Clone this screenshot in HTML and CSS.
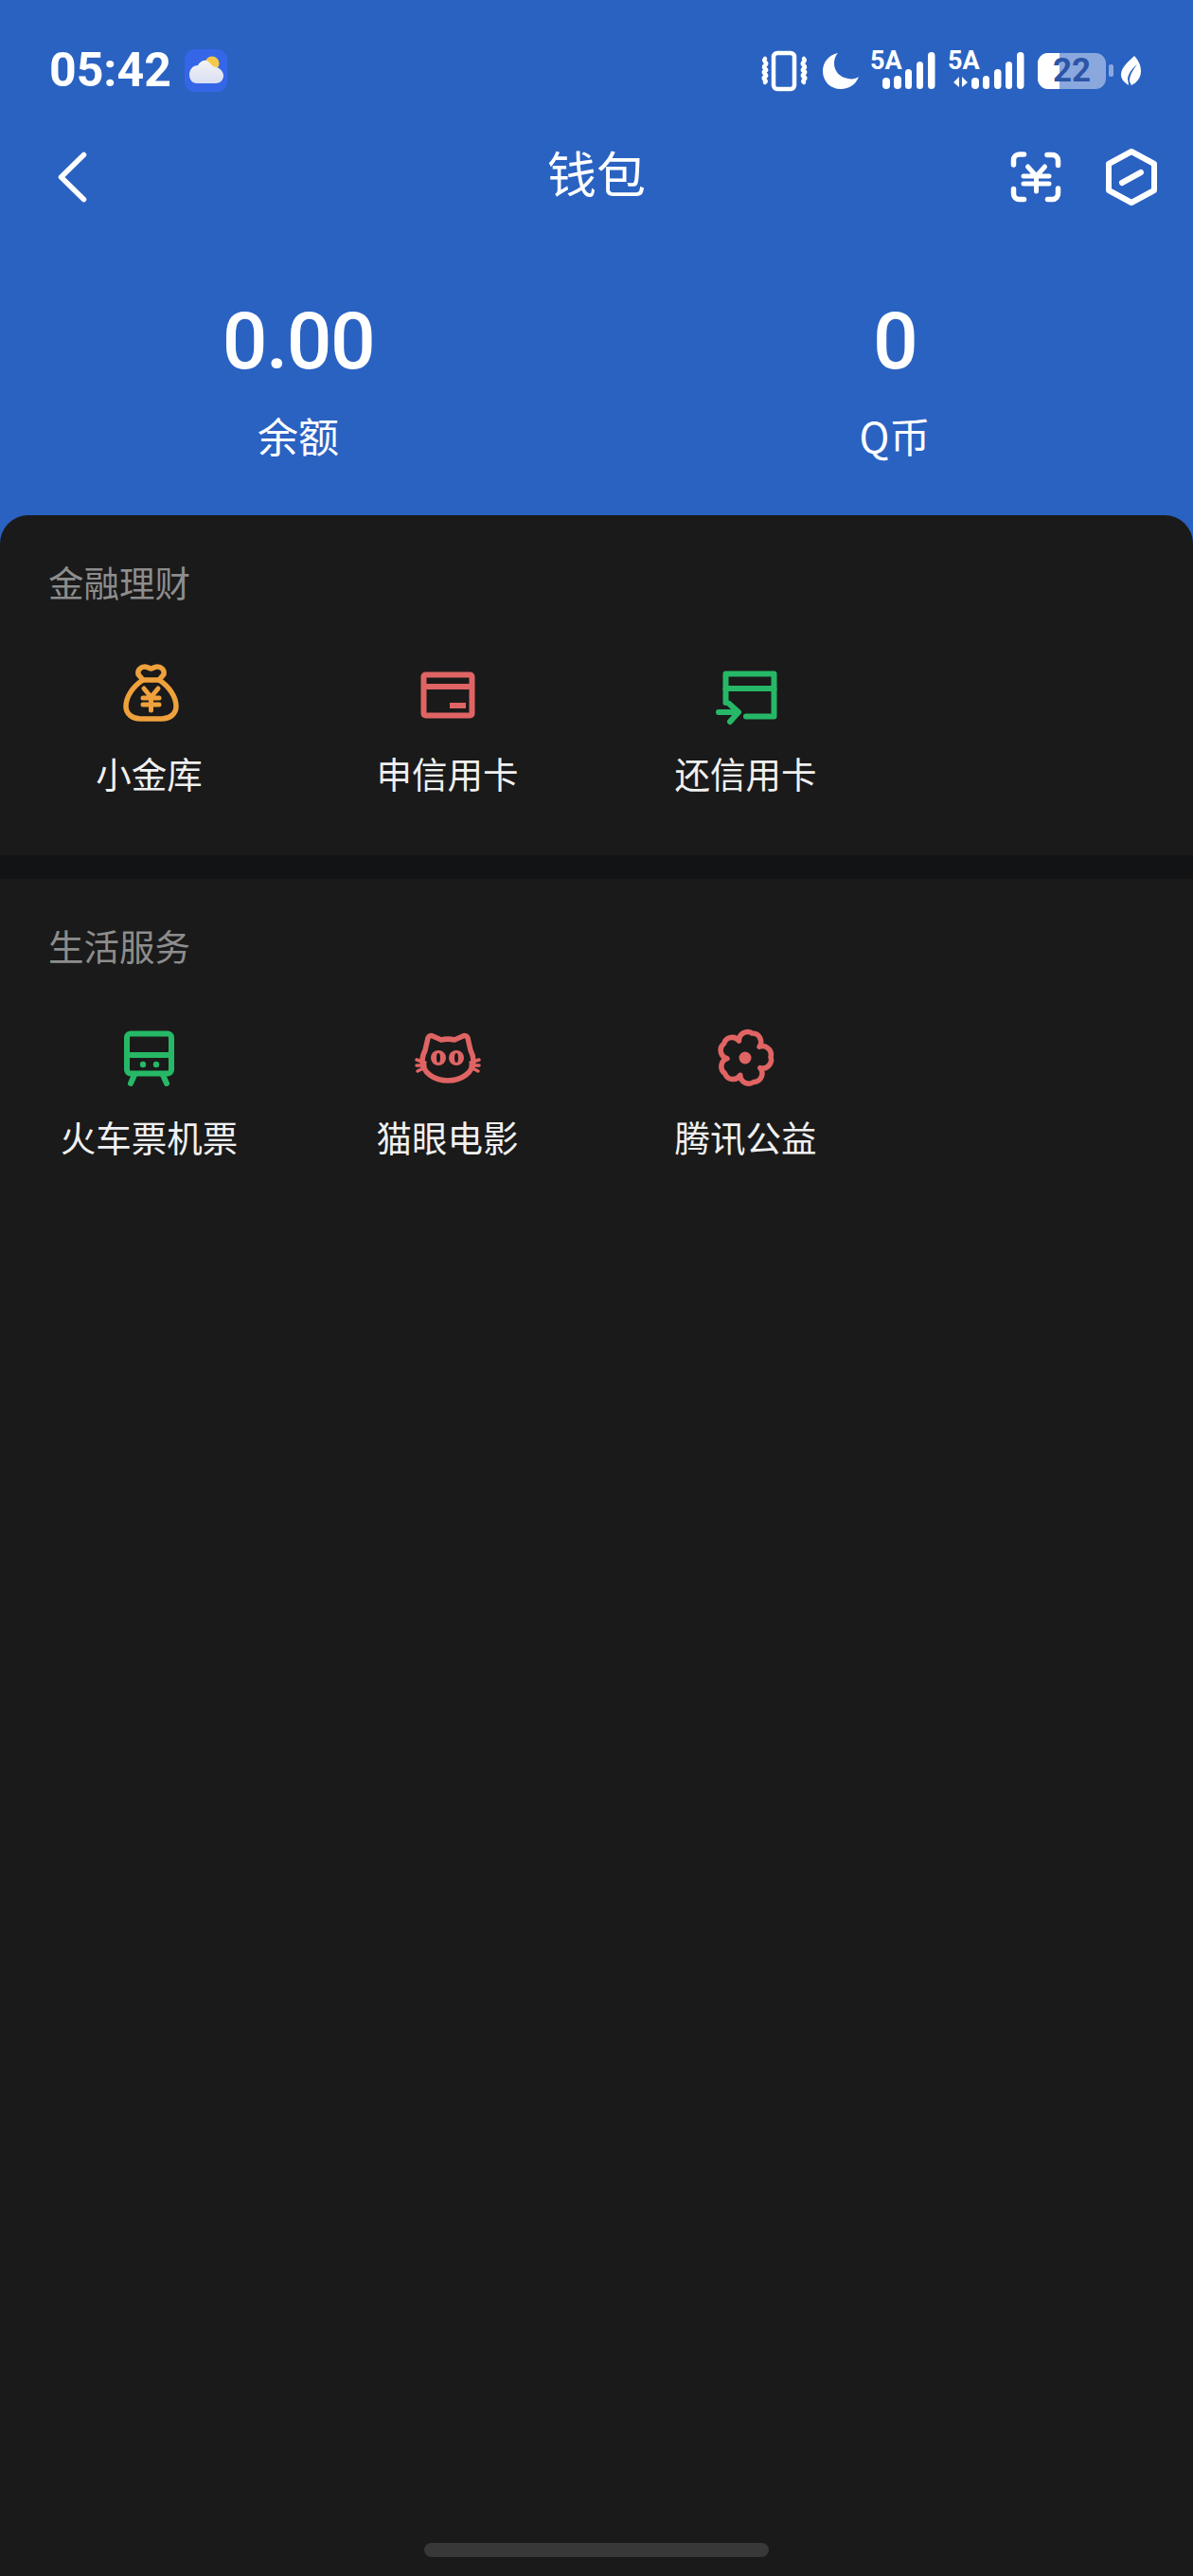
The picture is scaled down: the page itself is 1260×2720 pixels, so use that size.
FILE: index.html
```html
<!DOCTYPE html>
<html lang="zh-CN">
<head>
<meta charset="utf-8">
<title>钱包</title>
<link rel="stylesheet" href="styles.css">
</head>
<body>
<div class="page">
  <header class="top">
    <div class="status">
      <div class="status-left">
        <span class="time">05:42</span>
        <svg class="weather" viewBox="0 0 45 45">
          <defs>
            <linearGradient id="cloud" x1="0" y1="0" x2="0" y2="1">
              <stop offset="0" stop-color="#f3f3f3"/>
              <stop offset="1" stop-color="#d9dff3"/>
            </linearGradient>
          </defs>
          <rect width="45" height="45" rx="11" fill="#3566e8"/>
          <circle cx="29" cy="15" r="7.5" fill="#f5c84a"/>
          <path d="M13 36C8 36 5 32 5 27C5 21 9 17 14 17C16 13 20 11 23 12C27 13 28 18 33 19C38 20 41 24 41 28C41 33 37 36 33 36Z" fill="url(#cloud)"/>
        </svg>
      </div>
      <div class="status-right">
        <svg class="ic-vib" viewBox="0 0 50 42">
          <rect x="13" y="2" width="22" height="38" rx="4" fill="none" stroke="#fff" stroke-width="4.5"/>
          <path d="M4 8c-3 3 4 4 0 7s4 4 0 6 4 4 0 6 3 4 0 6M45 8c3 3-4 4 0 7s-4 4 0 6-4 4 0 6-3 4 0 6" fill="none" stroke="#fff" stroke-width="4.5" stroke-linecap="round"/>
        </svg>
        <svg class="ic-moon" viewBox="0 0 38 38">
          <path d="M16 0C6 2 0 10 0 19c0 11 8 19 19 19 9 0 16-5 19-13-3 2-7 3-11 2C18 26 12 19 12 11c0-4 1-8 4-11z" fill="#fff"/>
        </svg>
        <div class="net net-a">
          <span class="net-label">5A</span>
          <svg class="bars" viewBox="0 0 56 39">
            <rect x="0" y="27" width="8" height="12" rx="4" fill="#fff"/>
            <rect x="12" y="25" width="8" height="14" rx="4" fill="#fff"/>
            <rect x="24" y="18" width="7" height="21" rx="3.5" fill="#fff"/>
            <rect x="36" y="10" width="7" height="29" rx="3.5" fill="#fff"/>
            <rect x="48" y="0" width="7.5" height="39" rx="3.7" fill="#fff"/>
          </svg>
        </div>
        <div class="net net-b">
          <span class="net-label">5A</span>
          <svg class="bars-b" viewBox="0 0 77 39">
            <path d="M8 26v11L2 32zM11 26l6 6-6 5z" fill="#fff"/>
            <rect x="21" y="27" width="8" height="12" rx="4" fill="#fff"/>
            <rect x="33" y="25" width="7" height="14" rx="3.5" fill="#fff"/>
            <rect x="45" y="18" width="7.5" height="21" rx="3.7" fill="#fff"/>
            <rect x="57" y="10" width="7" height="29" rx="3.5" fill="#fff"/>
            <rect x="69" y="0" width="7.5" height="39" rx="3.7" fill="#fff"/>
          </svg>
        </div>
        <div class="battery"><span class="battery-fill"></span><span class="battery-num">22</span></div>
        <span class="battery-nub"></span>
        <svg class="ic-leaf" viewBox="0 0 21 31">
          <path d="M14 0c5 5 7 11 7 16 0 7-4 12-10 15-1-2-2-3-2-6 1-7 5-12 8-16-5 4-9 9-10 15l1 7C3 28 0 24 0 20 0 12 8 6 14 0z" fill="#fff"/>
        </svg>
      </div>
    </div>
    <nav class="nav">
      <svg class="back" viewBox="0 0 30 54">
        <path d="M27.5 3.5 3.5 27l24 23.5" fill="none" stroke="#fff" stroke-width="5.5" stroke-linecap="round" stroke-linejoin="round"/>
      </svg>
      <h1 class="title">钱包</h1>
      <div class="nav-actions">
        <svg class="ic-scan" viewBox="0 0 52 52">
          <path d="M2.500 13V8a6 6 0 0 1 6-6h5M38 2.500h5a6 6 0 0 1 6.500 6v5M49.500 38v5a6 6 0 0 1-6 6.500h-5M13.500 49.500h-5a6 6 0 0 1-6-6v-5" fill="none" stroke="#fff" stroke-width="5.5" stroke-linecap="round"/>
          <path d="M17.500 15l9 10 9-10M13 25h27M13 33h27M26.500 25v16" fill="none" stroke="#fff" stroke-width="5" stroke-linecap="round" stroke-linejoin="round"/>
        </svg>
        <svg class="ic-hex" viewBox="0 0 54 60">
          <path d="M27 3 51 16v28L27 57 3 44V16z" fill="none" stroke="#fff" stroke-width="6" stroke-linejoin="round"/>
          <path d="M17 36 37 25" fill="none" stroke="#fff" stroke-width="6" stroke-linecap="round"/>
        </svg>
      </div>
    </nav>
    <div class="stats">
      <div class="stat"><div class="stat-num">0.00</div><div class="stat-label">余额</div></div>
      <div class="stat"><div class="stat-num">0</div><div class="stat-label">Q币</div></div>
    </div>
  </header>
  <main class="panel">
    <section class="group">
      <h2 class="group-title">金融理财</h2>
      <div class="items">
        <div class="item">
          <svg class="icon" viewBox="0 0 64 64">
            <g fill="none" stroke="#eea13c" stroke-width="5.5" stroke-linecap="round" stroke-linejoin="round">
              <path d="M25 17C14 24 7 35 7 45C7 53 14 58 22 58H45C53 58 60 53 60 45C60 35 53 24 42 17Z"/>
              <path d="M25 17L20 11C19 6 23 3 27 3C30 3 32 5 33.5 5C35 5 37 3 40 3C44 3 48 6 47 11L42 17"/>
              <path d="M26 26L33.5 35L41 26M25 36H42M25 43H42M33.5 35V49" stroke-width="5"/>
            </g>
          </svg>
          <div class="item-label">小金库</div>
        </div>
        <div class="item">
          <svg class="icon" viewBox="0 0 64 64">
            <g fill="none" stroke="#e06464" stroke-width="6">
              <rect x="6.5" y="11.5" width="51" height="43" rx="2"/>
              <path d="M6.5 24h51"/>
              <path d="M34 44h17"/>
            </g>
          </svg>
          <div class="item-label">申信用卡</div>
        </div>
        <div class="item">
          <svg class="icon" viewBox="0 0 64 64">
            <g fill="none" stroke="#26b866" stroke-width="6" stroke-linecap="round" stroke-linejoin="round">
              <path d="M10.5 41V10.5h51v45H32"/>
              <path d="M10.5 26h51"/>
              <path d="M3 51h20M14 42l10 9-9 10"/>
            </g>
          </svg>
          <div class="item-label">还信用卡</div>
        </div>
      </div>
    </section>
    <div class="divider"></div>
    <section class="group">
      <h2 class="group-title">生活服务</h2>
      <div class="items">
        <div class="item">
          <svg class="icon" viewBox="0 0 64 64">
            <g fill="none" stroke="#26b866" stroke-width="6" stroke-linecap="round" stroke-linejoin="round">
              <rect x="8" y="6.5" width="47" height="42" rx="4"/>
              <path d="M8 29h47M16 50l-4 9M46 50l4 9"/>
            </g>
            <circle cx="25" cy="39" r="3.2" fill="#26b866"/>
            <circle cx="39" cy="39" r="3.2" fill="#26b866"/>
          </svg>
          <div class="item-label">火车票机票</div>
        </div>
        <div class="item">
          <svg class="icon" viewBox="0 0 64 64">
            <g fill="none" stroke="#e06464" stroke-width="5.5" stroke-linecap="round" stroke-linejoin="round">
              <path d="M11 11c1-2 3-3 5-2l9 4c4-1 10-1 14 0l9-4c2-1 4 0 5 2l3 13c2 4 3 7 3 11 0 12-12 21-27 21S5 47 5 35c0-4 1-7 3-11z"/>
            </g>
            <g fill="none" stroke="#e06464" stroke-width="3.5" stroke-linecap="round">
              <path d="M-1 34l9 3M-1 40h9M0 46l8-4M65 34l-9 3M65 40h-9M64 46l-8-4"/>
            </g>
            <circle cx="22" cy="32" r="8" fill="#e06464"/>
            <circle cx="41" cy="32" r="8" fill="#e06464"/>
            <ellipse cx="22" cy="32" rx="2" ry="5" fill="#1a1a1a"/>
            <ellipse cx="41" cy="32" rx="2" ry="5" fill="#1a1a1a"/>
          </svg>
          <div class="item-label">猫眼电影</div>
        </div>
        <div class="item">
          <svg class="icon" viewBox="0 0 64 64">
            <path d="M24.5 14.100A9 9 0 0 1 38.500 6.100A9 9 0 0 1 46 20.300A9 9 0 0 1 58 31.100A9 9 0 0 1 46.800 42.600A9 9 0 0 1 40.200 57.400A9 9 0 0 1 25.800 50.300A9 9 0 0 1 9.700 48.600A9 9 0 0 1 12 32.700A9 9 0 0 1 8.600 16.900A9 9 0 0 1 24.500 14.100Z" fill="none" stroke="#e06464" stroke-width="5.5" stroke-linejoin="round"/>
            <circle cx="31" cy="32" r="6.5" fill="#e06464"/>
          </svg>
          <div class="item-label">腾讯公益</div>
        </div>
      </div>
    </section>
  </main>
  <div class="home-bar"></div>
</div>
</body>
</html>
```

FILE: styles.css
```css
* { box-sizing: border-box; }
html, body { margin: 0; padding: 0; }
body {
  font-family: "Noto Sans CJK SC", "Noto Sans", sans-serif;
  background: #1a1a1a;
  color: #fff;
}
svg { display: block; overflow: visible; flex: none; }
.page {
  position: relative;
  display: flex;
  flex-direction: column;
  min-height: 2720px;
  background: #2a62c2;
}
.top { height: 544px; flex: none; padding-top: 52px; }

.status {
  display: flex;
  justify-content: space-between;
  align-items: center;
  height: 45px;
  padding: 0 55px 0 52px;
}
.status-left { display: flex; align-items: center; gap: 14px; }
.time {
  font-family: Roboto, sans-serif;
  font-weight: 700;
  font-size: 50px;
  line-height: 45px;
}
.weather { width: 45px; height: 45px; }
.status-right { display: flex; align-items: center; }
.ic-vib { width: 50px; height: 42px; margin-right: 15px; }
.ic-moon { width: 38px; height: 38px; margin-right: 14px; }
.net { position: relative; height: 40px; }
.net-label {
  position: absolute;
  left: -2px;
  top: -3px;
  font-family: Roboto, sans-serif;
  font-weight: 700;
  font-size: 27px;
  line-height: 24px;
}
.net-a { width: 66px; padding-left: 11px; margin-right: 16px; }
.net-b { width: 80px; padding-left: 2px; margin-right: 13px; }
.bars { width: 56px; height: 39px; }
.bars-b { width: 77px; height: 39px; }
.battery {
  position: relative;
  width: 72px;
  height: 38px;
  border-radius: 11px;
  background: rgba(255, 255, 255, .45);
}
.battery-fill {
  display: block;
  width: 23px;
  height: 100%;
  border-radius: 11px 0 0 11px;
  background: #fff;
}
.battery-num {
  position: absolute;
  left: 0;
  right: 0;
  top: 0;
  text-align: center;
  font-family: Roboto, sans-serif;
  font-weight: 700;
  font-size: 35px;
  line-height: 38px;
  color: #2c55a8;
}
.battery-nub {
  width: 5px;
  height: 13px;
  margin: 0 8px 0 3px;
  border-radius: 2px;
  background: rgba(255, 255, 255, .45);
}
.ic-leaf { width: 21px; height: 31px; }

.nav {
  position: relative;
  display: flex;
  align-items: center;
  justify-content: space-between;
  height: 60px;
  margin-top: 60px;
  padding: 0 38px 0 61px;
}
.back { width: 30px; height: 54px; }
.title {
  position: absolute;
  left: 0;
  right: 0;
  top: -5px;
  margin: 0;
  text-align: center;
  font-size: 52px;
  font-weight: 400;
  line-height: 60px;
}
.nav-actions { display: flex; align-items: center; gap: 48px; }
.ic-scan { width: 52px; height: 52px; }
.ic-hex { width: 54px; height: 60px; }

.stats { display: grid; grid-template-columns: 1fr 1fr; margin-top: 99px; }
.stat { text-align: center; }
.stat-num {
  font-family: Roboto, sans-serif;
  font-weight: 500;
  font-size: 84px;
  line-height: 90px;
  letter-spacing: 0;
}
.stat-num { letter-spacing: -1.5px; }
.stat-label {
  margin-top: 28px;
  font-size: 43px;
  line-height: 50px;
}

.panel {
  flex: 1;
  background: #1a1a1a;
  border-radius: 30px 30px 0 0;
}
.group { padding: 45px 0 62px; }
.divider { height: 25px; background: #121314; }
.group-title {
  margin: 0;
  padding-left: 51px;
  font-size: 37.5px;
  font-weight: 400;
  line-height: 50px;
  color: #8d8d8d;
}
.items { display: grid; grid-template-columns: repeat(4, 1fr); margin-top: 62px; }
.item { display: flex; flex-direction: column; align-items: center; }
.icon { width: 64px; height: 64px; }
.item-label {
  margin-top: 26px;
  font-size: 37.5px;
  line-height: 50px;
  color: #f0f0f0;
  white-space: nowrap;
}
.home-bar {
  position: absolute;
  left: 448px;
  bottom: 20px;
  width: 364px;
  height: 15px;
  border-radius: 8px;
  background: #383838;
}
```
